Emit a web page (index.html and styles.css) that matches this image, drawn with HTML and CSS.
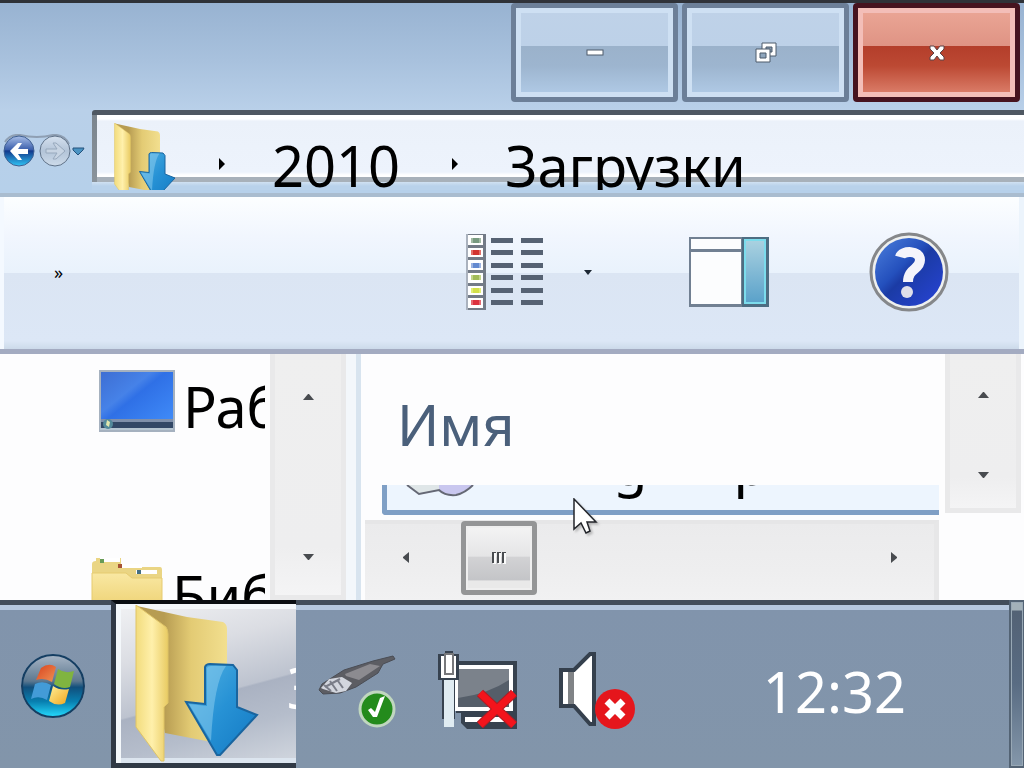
FILE: index.html
```html
<!DOCTYPE html>
<html lang="ru">
<head>
    <meta charset="UTF-8">
    <meta name="viewport" content="width=device-width, initial-scale=1.0">
    <title>Загрузки</title>
    <link rel="stylesheet" href="styles.css">
</head>
<body>
    <main class="window">
        <header class="title-bar">
            <button class="caption-button" aria-label="Свернуть">
                <svg width="18" height="8" viewBox="0 0 18 8"><rect x="1" y="1" width="16" height="5" fill="#fff" stroke="#4d5a6b"/></svg>
            </button>
            <button class="caption-button" aria-label="Восстановить">
                <svg width="22" height="21" viewBox="0 0 22 21" stroke="#4d5a6b">
                    <path d="M7 1h14v13H7z" fill="#fff"/><path d="M11 5h6v5h-6z" fill="#8296ac"/>
                    <path d="M1 7h14v13H1z" fill="#fff"/><path d="M5 11h6v5H5z" fill="#8fa6bd"/>
                </svg>
            </button>
            <button class="caption-button close" aria-label="Закрыть">
                <svg width="18" height="18" viewBox="0 0 18 18"><path d="M2 2h4l3 4 3-4h4v3l-4 4 4 4v3h-4l-3-4-3 4H2v-3l4-4-4-4z" fill="#fff" stroke="#5b4448"/></svg>
            </button>
        </header>

        <nav class="address-row">
            <div class="history">
                <svg width="86" height="34" viewBox="0 0 86 34">
                    <defs>
                        <linearGradient id="back" x2="0" y2="1"><stop offset="0" stop-color="#a9bfe8"/><stop offset=".45" stop-color="#3c60ac"/><stop offset=".5" stop-color="#12398c"/><stop offset="1" stop-color="#2fc4f5"/></linearGradient>
                        <linearGradient id="fwd" x2="0" y2="1"><stop offset="0" stop-color="#d5e1ef"/><stop offset=".5" stop-color="#b3c4d8"/><stop offset="1" stop-color="#cddbea"/></linearGradient>
                    </defs>
                    <path d="M5 8Q10 0 20 1q17 4 33 0 11-1 16 9" fill="none" stroke="#8f9fb3" stroke-width="2"/>
                    <circle cx="19" cy="17" r="15" fill="url(#back)" stroke="#3f5f91"/>
                    <path d="M10 17l8-8h4l-4 6h10v5H18l4 6h-4z" fill="#fff"/>
                    <circle cx="55" cy="17" r="15" fill="url(#fwd)" stroke="#5f7187"/>
                    <path d="M46 15h11l-4-6h3l9 8-9 8h-3l4-6H46z" fill="#c7d4e3" stroke="#98a9bd"/>
                    <path d="M73 14h11l-1 2-5 5-5-5z" fill="#4a93c3" stroke="#24527c"/>
                </svg>
            </div>
            <div class="address">
                <svg class="address-icon" width="62" height="70" viewBox="0 0 124 140">
                    <use href="#folder-download"/>
                </svg>
                <svg class="crumb-arrow" width="6" height="12" viewBox="0 0 6 12"><path d="M0 0l6 6-6 6z"/></svg>
                <button class="crumb">2010</button>
                <svg class="crumb-arrow" width="6" height="12" viewBox="0 0 6 12"><path d="M0 0l6 6-6 6z"/></svg>
                <button class="crumb">Загрузки</button>
            </div>
        </nav>

        <div class="toolbar">
            <button class="tool more">»</button>
            <button class="tool" aria-label="Вид">
                <svg width="78" height="78" viewBox="0 0 78 78">
                    <path d="M0 1h20v76H0z" fill="#737b87"/><path d="M0 1h2v76H0z" fill="#aab2be"/>
                    <path d="M2 2h15v10H2zM2 15h15v9H2zM2 27h15v10H2zM2 40h15v10H2zM2 53h15v9H2zM2 65h15v10H2z" fill="#fff"/>
                    <path d="M5 5h10v5H5z" fill="#a3bba4"/><path d="M5 17h10v5H5z" fill="#e2706a"/>
                    <path d="M5 30h10v5H5z" fill="#9db4e2"/><path d="M5 42h10v5H5z" fill="#c3d58b"/>
                    <path d="M5 55h10v5H5z" fill="#e2ee76"/><path d="M5 67h10v5H5z" fill="#e56a72"/>
                    <path d="M7 5h6v5H7z" fill="#789a80"/><path d="M7 17h6v5H7z" fill="#d2332f"/>
                    <path d="M7 30h6v5H7z" fill="#648ad0"/><path d="M7 42h6v5H7z" fill="#a1bb58"/>
                    <path d="M7 55h6v5H7z" fill="#d3e04a"/><path d="M7 67h6v5H7z" fill="#dc323f"/>
                    <path d="M25 5h22v5H25zM55 5h22v5H55zM25 17h22v5H25zM55 17h22v5H55zM25 30h22v5H25zM55 30h22v5H55zM25 42h22v5H25zM55 42h22v5H55zM25 55h22v5H25zM55 55h22v5H55zM25 67h22v5H25zM55 67h22v5H55z" fill="#566273"/>
                </svg>
            </button>
            <button class="tool drop" aria-label="Дополнительно">
                <svg width="8" height="5" viewBox="0 0 8 5"><path d="M0 0h8L4 5z" fill="#1c2733"/></svg>
            </button>
            <button class="tool preview" aria-label="Область просмотра">
                <svg width="80" height="70" viewBox="0 0 80 70">
                    <defs><linearGradient id="pane" x2="0" y2="1"><stop offset="0" stop-color="#a9d1e0"/><stop offset="1" stop-color="#5ba2ca"/></linearGradient></defs>
                    <path d="M0 0h80v70H0z" fill="#718092"/><path d="M53 0h27v70H53z" fill="#4d6d82"/>
                    <path d="M2 2h50v10H2zM2 15h50v52H2z" fill="#fcfdfe"/>
                    <path d="M55 2h22v65H55z" fill="#7cdcec"/><path d="M57 4h18v61H57z" fill="url(#pane)"/>
                </svg>
            </button>
            <button class="tool help" aria-label="Справка">
                <svg width="80" height="80" viewBox="0 0 80 80">
                    <defs><linearGradient id="help" x2="1" y2="1"><stop offset="0" stop-color="#4d80dc"/><stop offset=".4" stop-color="#2450bd"/><stop offset=".5" stop-color="#1b3ba5"/><stop offset="1" stop-color="#2844d8"/></linearGradient></defs>
                    <circle cx="40" cy="40" r="38" fill="#eef0ef" stroke="#85878a" stroke-width="3"/>
                    <circle cx="40" cy="40" r="34" fill="url(#help)"/>
                    <path d="M31 25c2-7 20-7 20 3 0 10-12 8-12 22" fill="none" stroke="#f4f4fb" stroke-width="10"/>
                    <circle cx="38" cy="60" r="6" fill="#dfdfea"/>
                </svg>
            </button>
        </div>

        <section class="content">
            <aside class="tree">
                <div class="tree-item desktop">
                    <svg width="76" height="62" viewBox="0 0 76 62">
                        <defs><linearGradient id="desk" x2="1" y2="1"><stop offset="0" stop-color="#3d6ed3"/><stop offset=".35" stop-color="#4682e8"/><stop offset=".45" stop-color="#2f70e6"/><stop offset="1" stop-color="#4390fb"/></linearGradient></defs>
                        <path d="M0 0h76v62H0z" fill="#a5b1bf"/><path d="M2 2h72v58H2z" fill="url(#desk)"/>
                        <path d="M2 49h72v3H2z" fill="#8090aa"/><path d="M2 52h72v6H2z" fill="#334866"/><path d="M1 58h73v2H1z" fill="#b6c5d1"/>
                        <circle cx="9" cy="54" r="5" fill="#53899a"/><path d="M8 50l3 2-1 5-3-2z" fill="#e1e7ad"/>
                    </svg>
                    <span>Раб</span>
                </div>
                <div class="tree-item library">
                    <svg width="72" height="60" viewBox="0 0 72 60">
                        <defs><linearGradient id="lib" x2="0" y2="1"><stop offset="0" stop-color="#f9e8a3"/><stop offset="1" stop-color="#ebcd69"/></linearGradient></defs>
                        <path d="M1 60V8q0-3 4-3V2h25v6h6l2 3h31q2 0 2 3v46z" fill="#ead584"/>
                        <path d="M9 2h20v4H9zM27 8h24v4H27zM45 14h21v4H45z" fill="#fff"/>
                        <path d="M1 60V17h34l6 5h30v38z" fill="url(#lib)" stroke="#e6cb70"/>
                        <path d="M45 14h18v4H45z" fill="#fff"/>
                        <path d="M9 3h4v4H9z" fill="#679b55"/><path d="M27 8h4v4h-4z" fill="#a65335"/><path d="M46 14h4v4h-4z" fill="#456f82"/>
                    </svg>
                    <span>Биб</span>
                </div>
            </aside>
            <div class="v-scroll tree-scroll">
                <button aria-label="Вверх"><svg width="11" height="6" viewBox="0 0 11 6"><path d="M0 6l5-6h1l5 6z"/></svg></button>
                <button aria-label="Вниз"><svg width="11" height="6" viewBox="0 0 11 6"><path d="M0 0h11L6 6H5z"/></svg></button>
            </div>
            <div class="splitter"></div>
            <div class="files">
                <div class="file-list">
                    <button class="column-header">Имя</button>
                    <div class="file-row">
                        <svg class="file-icon" width="68" height="12" viewBox="0 0 68 12">
                            <path d="M1 0l12 9 20-4 5-5z" fill="#dfe6e8"/><path d="M33 0h34Q52 12 43 9q-8-1-10-5z" fill="#c9c7ef"/>
                            <path d="M1 0l12 9 20-4q6 6 17 5 9-2 17-10" fill="none" stroke="#656875" stroke-width="2"/>
                        </svg>
                        <span>g</span>
                        <span>p</span>
                    </div>
                </div>
                <div class="v-scroll file-scroll">
                    <button aria-label="Вверх"><svg width="11" height="6" viewBox="0 0 11 6"><path d="M0 6l5-6h1l5 6z"/></svg></button>
                    <button aria-label="Вниз"><svg width="11" height="6" viewBox="0 0 11 6"><path d="M0 0h11L6 6H5z"/></svg></button>
                </div>
                <div class="h-scroll">
                    <button aria-label="Влево"><svg width="6" height="11" viewBox="0 0 6 11"><path d="M6 0v11L0 6V5z"/></svg></button>
                    <button class="thumb" aria-label="Прокрутка"><svg width="15" height="12" viewBox="0 0 15 12"><rect x="1" y="1" width="3" height="11"/><rect x="6" y="1" width="3" height="11"/><rect x="11" y="1" width="3" height="11"/><path d="M0 0h4v1H2v10H0zM5 0h4v1H7v10H5zM10 0h4v1h-2v10h-2z"/></svg></button>
                    <button class="right" aria-label="Вправо"><svg width="6" height="11" viewBox="0 0 6 11"><path d="M0 0v11l6-5V5z"/></svg></button>
                </div>
            </div>
        </section>
        <svg class="cursor" width="26" height="38" viewBox="0 0 26 38">
            <path d="M1 1v30l7-6 5 10 4-2-3-9h9z" fill="#fff" stroke="#24262b" stroke-width="1.5"/>
        </svg>
    </main>

    <footer class="taskbar">
        <button class="start" aria-label="Пуск">
            <svg width="66" height="66" viewBox="0 0 66 66">
                <defs>
                    <linearGradient id="orb" x2="0" y2="1"><stop offset="0" stop-color="#a7b5c5"/><stop offset=".42" stop-color="#5d7890"/><stop offset=".52" stop-color="#114f7c"/><stop offset=".75" stop-color="#087fb0"/><stop offset="1" stop-color="#25dcff"/></linearGradient>
                    <linearGradient id="red" x2="1" y2="1"><stop offset="0" stop-color="#d9421d"/><stop offset="1" stop-color="#ef9356"/></linearGradient>
                    <linearGradient id="yellow" x2="1" y2="1"><stop offset="0" stop-color="#fff099"/><stop offset="1" stop-color="#f0a51d"/></linearGradient>
                </defs>
                <circle cx="33" cy="33" r="32" fill="#b5cadd"/><circle cx="33" cy="33" r="31" fill="url(#orb)" stroke="#153e62" stroke-width="2"/>
                <path d="M21 15q8-6 15-1l-4 15q-8-5-16-2z" fill="url(#red)"/>
                <path d="M38 16q7 5 16 2l-4 16q-8 3-16-3z" fill="#80b440"/>
                <path d="M15 31q8-4 16 1l-4 15q-8-5-16-1z" fill="#439bd7"/>
                <path d="M33 33q7 5 16 3l-4 14q-8 4-16-2z" fill="url(#yellow)"/>
            </svg>
        </button>
        <button class="task">
            <svg class="task-icon" width="124" height="158" viewBox="0 0 124 158">
                <defs>
                    <linearGradient id="leaf" x2="1" y2="0"><stop offset="0" stop-color="#f2dc7d"/><stop offset=".5" stop-color="#fff0ab"/><stop offset="1" stop-color="#e9cb63"/></linearGradient>
                    <linearGradient id="leaf-back" x2="1" y2="0"><stop offset="0" stop-color="#b79c52"/><stop offset=".3" stop-color="#b79c52"/><stop offset=".6" stop-color="#e3cb74"/><stop offset="1" stop-color="#f2df8f"/></linearGradient>
                    <linearGradient id="arrow" x2="1" y2="1"><stop offset="0" stop-color="#53b3e3"/><stop offset=".5" stop-color="#2792d5"/><stop offset="1" stop-color="#1379c3"/></linearGradient>
                    <g id="folder-download">
                        <path d="M2 1l50 11 36 5q4 2 4 7v116L30 128z" fill="url(#leaf-back)"/>
                        <path d="M1 0l30 22q2 3 2 7v69l-4 4v54h-3L1 122z" fill="url(#leaf)" stroke="#dfc467"/>
                        <path d="M70 62q1-3 5-3l23 1 4 5v37l20 8-37 40h-3L51 97l19 2z" fill="url(#arrow)" stroke="#1a659f" stroke-width="2"/>
                        <path d="M72 63q1-2 4-2h15q-12 16-15 75L54 99l18 2z" fill="#8fd0ef" opacity=".5"/>
                    </g>
                </defs>
                <use href="#folder-download"/>
            </svg>
            <span class="task-label">З</span>
        </button>
        <div class="tray">
            <button aria-label="Безопасное извлечение устройства">
                <svg width="80" height="80" viewBox="0 0 80 80">
                    <path d="M1 40l3-6 22-14 29-9 20-5 2 3-7 3-5 2-5 9-22 14-16 6L5 44z" fill="#5c5d63" stroke="#4a4d55"/>
                    <path d="M27 24l25-10 10 2-21 14-13-4z" fill="#8c8b90"/>
                    <path d="M3 38l8-9 13-2 10 6-6 8-10 2-13-4z" fill="#d3d6de"/><path d="M6 35l7 6m-1-10l7 10m1-10l5 7m-18-1l15-8" stroke="#7a7d88" stroke-width="2"/>
                    <circle cx="59" cy="59" r="17" fill="#248b1c" stroke="#c0d7bf" stroke-width="3"/>
                    <path d="M50 60l3-2 4 4 5-14 5-2-8 21h-4z" fill="#fff"/>
                </svg>
            </button>
            <button aria-label="Сеть">
                <svg width="80" height="80" viewBox="0 0 80 80">
                    <path d="M18 11h61v52H18z" fill="#37424f"/><path d="M17 15h58v46H17z" fill="#fff"/>
                    <path d="M20 19h51v38H20z" fill="#7b828b"/><path d="M20 48q30-4 51-18v27H20z" fill="#555e69"/>
                    <path d="M23 63h56v16H29l-6-6z" fill="#37424f"/><path d="M27 67h39v5H27z" fill="#fff"/>
                    <path d="M4 29h13v40H4z" fill="#37424f"/><path d="M6 29h10v48H6z" fill="#e0ecf2"/>
                    <path d="M7 1h8v3h6v26H0V4h7z" fill="#37424f"/><path d="M3 6h15v22H3z" fill="#fff"/><path d="M7 4h8v20H7z" fill="#fff" stroke="#77787b" stroke-width="2"/>
                    <path d="M42 43l34 32m0-32L42 75" stroke="#b01c24" stroke-width="9"/><path d="M42 43l34 32m0-32L42 75" stroke="#f3141c" stroke-width="7"/>
                </svg>
            </button>
            <button aria-label="Динамики">
                <svg width="80" height="80" viewBox="0 0 80 80">
                    <path d="M3 20h13L32 4h4v70h-4L16 56H3z" fill="#fff" stroke="#35404d" stroke-width="4"/>
                    <path d="M10 22h6v32h-6z" fill="#808386"/>
                    <circle cx="57" cy="59" r="20" fill="#e5161c"/>
                    <path d="M49 51l16 16m0-16L49 67" stroke="#fff" stroke-width="7"/>
                </svg>
            </button>
        </div>
        <time class="clock">12:32</time>
        <button class="show-desktop" aria-label="Свернуть все окна"></button>
    </footer>
</body>
</html>
```
FILE: styles.css
```css
* {
    box-sizing: border-box;
}

body {
    margin: 0;
    height: 100vh;
    display: flex;
    flex-direction: column;
    overflow: hidden;
    font-family: "Noto Sans", "Open Sans", sans-serif;
    font-size: 56px;
    line-height: 72px;
    color: #000;
    background: #8295aa;
}

button {
    margin: 0;
    padding: 0;
    border: 0;
    background: none;
    color: inherit;
    font: inherit;
    line-height: inherit;
}

svg {
    display: block;
    flex-shrink: 0;
}

.window {
    position: relative;
    flex: 1;
    min-height: 0;
    display: flex;
    flex-direction: column;
    overflow: hidden;
    background: linear-gradient(#97b2d1 0, #a8c1dd 60px, #b9d0e9 110px, #b6d0ea 190px);
}

/* Title bar */
.title-bar {
    display: flex;
    justify-content: flex-end;
    gap: 4px;
    height: 110px;
    padding: 0 4px 8px 0;
    border-top: 3px solid #2f3238;
    flex-shrink: 0;
}

.caption-button {
    display: flex;
    align-items: center;
    justify-content: center;
    width: 167px;
    border: 5px solid #6c7f98;
    border-radius: 4px;
    box-shadow: inset 0 0 0 5px #cee0f3;
    background: linear-gradient(#bfd2e8 0, #bdd1e8 43%, #9bb2cb 43%, #9db5cf 65%, #b2cce8 100%);
}

.caption-button.close {
    border-color: #46131f;
    box-shadow: inset 0 0 0 5px #f3beb8;
    background: linear-gradient(#eba797 0, #df9384 43%, #b43e2b 43%, #bc4933 65%, #df8470 100%);
}

/* Address bar */
.address-row {
    display: flex;
    height: 87px;
    border-bottom: 4px solid #a9bccf;
    flex-shrink: 0;
}

.history {
    width: 92px;
    padding-top: 24px;
}

.address {
    flex: 1;
    display: flex;
    height: 80px;
    overflow: hidden;
    border-top: 5px solid #4f5862;
    border-top-left-radius: 3px;
    background:
        linear-gradient(#7b858e, #8a939b) 0 0 / 5px 67px no-repeat,
        linear-gradient(#fff 0, #fff 4px, #ebf1fa 6px, #edf3fc 57px, #fff 60px, #fff 62px, #a8b1ba 62px, #a8b1ba 67px, #d0e1f2 67px, #b9d2eb 71px);
}

.address-icon {
    margin: 8px 43px 0 22px;
}

.crumb-arrow {
    margin-top: 43px;
}

.crumb {
    height: 72px;
    padding: 14px 0 0;
    margin: 0 52px 0 47px;
}

/* Toolbar */
.toolbar {
    display: flex;
    align-items: center;
    height: 157px;
    padding: 3px 75px 5px 54px;
    border-bottom: 5px solid #a3abc1;
    box-shadow: inset 4px 0 #f4f9ff, inset -5px 0 #ecf4fc;
    background: linear-gradient(#fcfeff 0, #f1f6fe 40px, #e9f2fc 76px, #dbe5f3 76px, #dce7f6 144px, #ccdaea 152px);
    flex-shrink: 0;
}

.more {
    margin-right: auto;
    font-size: 18px;
    line-height: 20px;
}

.drop {
    padding: 0 97px 0 40px;
}

.preview {
    margin-right: 100px;
}

/* Folder tree and file list */
.content {
    flex: 1;
    min-height: 0;
    display: flex;
    background: #fdfdfe;
}

.tree {
    width: 265px;
    overflow: hidden;
    flex-shrink: 0;
}

.tree-item {
    display: flex;
    white-space: nowrap;
}

.desktop {
    height: 186px;
    padding: 16px 0 0 99px;
    gap: 8px;
}

.library {
    padding-left: 91px;
    gap: 9px;
}

.library svg {
    margin-top: 16px;
}

.library span {
    margin-top: 19px;
}

.v-scroll {
    display: flex;
    flex-direction: column;
    justify-content: space-between;
    align-items: center;
    width: 76px;
    border: 5px solid #e9e9ea;
    border-top: 0;
    background: linear-gradient(#efefef 0, #eeeeef 80%, #f4f4f5 100%);
    flex-shrink: 0;
}

.v-scroll button,
.h-scroll button {
    display: flex;
    align-items: center;
    justify-content: center;
}

.v-scroll path,
.h-scroll path {
    fill: #484b4f;
}

.tree-scroll {
    margin-left: 5px;
    padding: 40px 0 35px;
}

.splitter {
    width: 15px;
    border-right: 5px solid #d8e4ef;
    background: #f3f7fb;
    margin-right: 4px;
    flex-shrink: 0;
}

.files {
    flex: 1;
    display: grid;
    grid-template-columns: 1fr 79px;
    grid-template-rows: 161px 1fr;
    gap: 5px 6px;
    overflow: hidden;
}

.file-list {
    padding-left: 17px;
}

.column-header {
    display: block;
    height: 131px;
    padding: 8px 0 0 15px;
    color: #4b607b;
}

.file-row {
    display: flex;
    height: 30px;
    overflow: hidden;
    border-left: 5px solid #7f9fc5;
    border-bottom: 5px solid #7f9fc5;
    border-bottom-left-radius: 4px;
    background: #edf5fe;
    line-height: 0;
}

.file-icon {
    margin: 0 139px 0 19px;
}

.file-row span {
    margin: -22px 86px 0 0;
}

.file-scroll {
    height: 159px;
    padding: 38px 0 30px;
}

.h-scroll {
    display: flex;
    border-top: 4px solid #e6e6e7;
    border-right: 5px solid #e7e7e8;
    background: linear-gradient(#ebebec, #eeeeef 60%, #f1f1f2);
}

.h-scroll button {
    width: 81px;
    height: 66px;
}

.h-scroll .thumb {
    width: 76px;
    height: 74px;
    margin: -3px 0 0 15px;
    border: 5px solid #949596;
    border-radius: 4px;
    box-shadow: inset 0 0 0 2px #efefef;
    background: linear-gradient(#f4f4f4 0, #e5e5e6 47%, #d2d2d4 49%, #c4c5c8 84%, #e9e9e9 86%);
}

.thumb rect {
    fill: #fafafa;
}

.h-scroll .right {
    margin-left: auto;
}

.cursor {
    position: absolute;
    left: 573px;
    top: 498px;
    filter: drop-shadow(2px 2px 1px #8888);
}

/* Taskbar */
.taskbar {
    display: flex;
    align-items: center;
    height: 168px;
    background: linear-gradient(#424d5a 0, #424d5a 5px, #b5c7dd 5px, #b5c7dd 10px, #8194ac 10px, #8295aa 100%);
    color: #fff;
    flex-shrink: 0;
}

.start {
    width: 111px;
    padding: 3px 0 0 20px;
}

.task {
    align-self: stretch;
    display: flex;
    width: 185px;
    overflow: hidden;
    border: solid #303945;
    border-width: 4px 0 5px 5px;
    border-top-color: #0a0e12;
    box-shadow: inset 5px 5px #f4f8fb, inset 0 -5px #dce5ef;
    background: linear-gradient(165deg, #f1f2f4 0, #dbdde3 30%, #bdc3cf 56%, #aab2c2 57%, #b5bdcb 75%, #d2d7df 100%);
}

.task-icon {
    margin: 1px 31px 0 19px;
}

.task-label {
    margin: 47px 0 0 -3px;
}

.tray {
    display: flex;
    gap: 40px;
    padding: 11px 0 0 22px;
}

.clock {
    margin: 14px 0 0 auto;
    padding-right: 103px;
}

.show-desktop {
    align-self: stretch;
    width: 15px;
    border: 2px solid #536374;
    border-right-width: 1px;
    box-shadow: inset 0 0 0 1px #98a8b5;
    background: linear-gradient(#a3b1b9 0, #a3b1b9 8px, #536275 9px, #596c83 50%, #8497aa 100%);
}
```
